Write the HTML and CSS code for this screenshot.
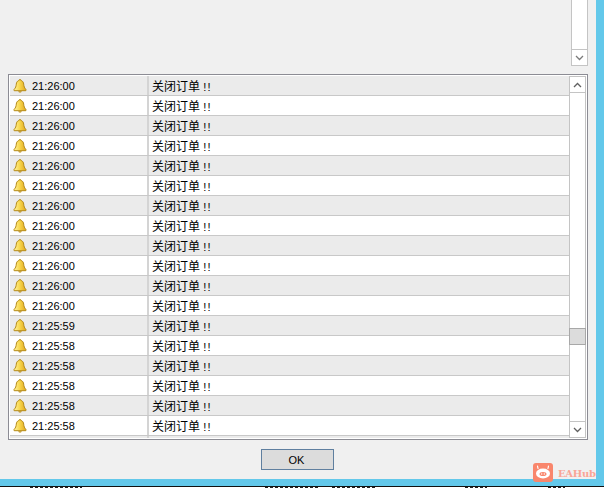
FILE: index.html
```html
<!DOCTYPE html>
<html lang="zh">
<head>
<meta charset="utf-8">
<title>Alerts</title>
<link rel="stylesheet" href="styles.css">
</head>
<body>
<svg class="defs" width="0" height="0" aria-hidden="true">
  <defs>
    <linearGradient id="bellfill" x1="0" y1="0" x2="1" y2="0">
      <stop offset="0" stop-color="#fff2a0"/>
      <stop offset="0.45" stop-color="#f9d84e"/>
      <stop offset="1" stop-color="#e0a820"/>
    </linearGradient>
    <symbol id="bell" viewBox="0 0 14 14">
      <path d="M7 .6c.8 0 1.200.4 1.300 1 1.500.5 2.200 1.800 2.400 3.500.2 2.200.7 3.900 2.200 5.200v1.400H1.100v-1.400c1.500-1.300 2-3 2.200-5.200.2-1.700.9-3 2.400-3.500.1-.6.500-1 1.300-1z" fill="url(#bellfill)" stroke="#b48a18" stroke-width="1"/>
      <path d="M5.200 12.200c.2.900.9 1.400 1.800 1.400s1.600-.5 1.800-1.400z" fill="#b98a14"/>
    </symbol>
  </defs>
</svg>
<div class="desktop">
  <main class="dialog">
    <div class="top-scroll">
      <div class="top-track"></div>
      <div class="sb-btn sb-btn-last">
        <svg class="chev" viewBox="0 0 9 6"><path d="M1 1l3.500 3.500L8 1" fill="none" stroke="#7a7a7a" stroke-width="1.300"/></svg>
      </div>
    </div>
    <section class="listbox">
      <div class="rows">
        <div class="row"><div class="cell-time"><svg class="bell"><use href="#bell"/></svg><span>21:26:00</span></div><div class="cell-msg">关闭订单 <span class="bang">!!</span></div></div>
        <div class="row"><div class="cell-time"><svg class="bell"><use href="#bell"/></svg><span>21:26:00</span></div><div class="cell-msg">关闭订单 <span class="bang">!!</span></div></div>
        <div class="row"><div class="cell-time"><svg class="bell"><use href="#bell"/></svg><span>21:26:00</span></div><div class="cell-msg">关闭订单 <span class="bang">!!</span></div></div>
        <div class="row"><div class="cell-time"><svg class="bell"><use href="#bell"/></svg><span>21:26:00</span></div><div class="cell-msg">关闭订单 <span class="bang">!!</span></div></div>
        <div class="row"><div class="cell-time"><svg class="bell"><use href="#bell"/></svg><span>21:26:00</span></div><div class="cell-msg">关闭订单 <span class="bang">!!</span></div></div>
        <div class="row"><div class="cell-time"><svg class="bell"><use href="#bell"/></svg><span>21:26:00</span></div><div class="cell-msg">关闭订单 <span class="bang">!!</span></div></div>
        <div class="row"><div class="cell-time"><svg class="bell"><use href="#bell"/></svg><span>21:26:00</span></div><div class="cell-msg">关闭订单 <span class="bang">!!</span></div></div>
        <div class="row"><div class="cell-time"><svg class="bell"><use href="#bell"/></svg><span>21:26:00</span></div><div class="cell-msg">关闭订单 <span class="bang">!!</span></div></div>
        <div class="row"><div class="cell-time"><svg class="bell"><use href="#bell"/></svg><span>21:26:00</span></div><div class="cell-msg">关闭订单 <span class="bang">!!</span></div></div>
        <div class="row"><div class="cell-time"><svg class="bell"><use href="#bell"/></svg><span>21:26:00</span></div><div class="cell-msg">关闭订单 <span class="bang">!!</span></div></div>
        <div class="row"><div class="cell-time"><svg class="bell"><use href="#bell"/></svg><span>21:26:00</span></div><div class="cell-msg">关闭订单 <span class="bang">!!</span></div></div>
        <div class="row"><div class="cell-time"><svg class="bell"><use href="#bell"/></svg><span>21:26:00</span></div><div class="cell-msg">关闭订单 <span class="bang">!!</span></div></div>
        <div class="row"><div class="cell-time"><svg class="bell"><use href="#bell"/></svg><span>21:25:59</span></div><div class="cell-msg">关闭订单 <span class="bang">!!</span></div></div>
        <div class="row"><div class="cell-time"><svg class="bell"><use href="#bell"/></svg><span>21:25:58</span></div><div class="cell-msg">关闭订单 <span class="bang">!!</span></div></div>
        <div class="row"><div class="cell-time"><svg class="bell"><use href="#bell"/></svg><span>21:25:58</span></div><div class="cell-msg">关闭订单 <span class="bang">!!</span></div></div>
        <div class="row"><div class="cell-time"><svg class="bell"><use href="#bell"/></svg><span>21:25:58</span></div><div class="cell-msg">关闭订单 <span class="bang">!!</span></div></div>
        <div class="row"><div class="cell-time"><svg class="bell"><use href="#bell"/></svg><span>21:25:58</span></div><div class="cell-msg">关闭订单 <span class="bang">!!</span></div></div>
        <div class="row"><div class="cell-time"><svg class="bell"><use href="#bell"/></svg><span>21:25:58</span></div><div class="cell-msg">关闭订单 <span class="bang">!!</span></div></div>
        <div class="row row-tail"><div class="cell-time"></div><div class="cell-msg"></div></div>
      </div>
      <div class="scrollbar">
        <div class="sb-btn sb-up">
          <svg class="chev" viewBox="0 0 9 6"><path d="M1 5l3.500-3.500L8 5" fill="none" stroke="#606060" stroke-width="1.300"/></svg>
        </div>
        <div class="track">
          <div class="thumb"></div>
        </div>
        <div class="sb-btn sb-down">
          <svg class="chev" viewBox="0 0 9 6"><path d="M1 1l3.500 3.500L8 1" fill="none" stroke="#606060" stroke-width="1.300"/></svg>
        </div>
      </div>
    </section>
    <footer class="actions">
      <button class="ok" type="button">OK</button>
    </footer>
  </main>
</div>
<div class="strip"></div>
<div class="watermark">
  <svg class="wm-icon" viewBox="0 0 20 20">
    <rect width="20" height="19" rx="3" fill="#f9866c"/>
    <path d="M5 5.500L4.500 3M15 5.500L15.500 3" stroke="#fff" stroke-width="1.200" stroke-linecap="round"/>
    <ellipse cx="10" cy="10.500" rx="7" ry="5" fill="#fff"/>
    <ellipse cx="10" cy="11" rx="3.500" ry="2" fill="#f9866c"/>
    <circle cx="8.700" cy="11" r=".7" fill="#fff"/>
    <circle cx="11.300" cy="11" r=".7" fill="#fff"/>
  </svg>
  <span class="wm-text">EAHub</span>
</div>
</body>
</html>
```
FILE: styles.css
```css
* { box-sizing: border-box; }
html, body { margin: 0; padding: 0; }
body {
  width: 604px;
  height: 488px;
  overflow: hidden;
  position: relative;
  background: #fff;
  font-family: "Liberation Sans", "Noto Sans CJK SC", sans-serif;
  font-size: 11px;
  color: #000;
}
.defs { position: absolute; }
.desktop {
  height: 486px;
  background: #63c8ea;
  padding-right: 8px;
  padding-bottom: 7px;
}
.dialog {
  height: 479px;
  background: #f0f0f0;
  display: flex;
  flex-direction: column;
}
.top-scroll {
  align-self: flex-end;
  width: 17px;
  height: 66px;
  margin-right: 8px;
  margin-bottom: 8px;
  border: 1px solid #c4c4c4;
  border-top: 0;
  background: #fff;
  display: flex;
  flex-direction: column;
}
.top-track { flex: 1; }
.sb-btn {
  height: 16px;
  display: flex;
  align-items: center;
  justify-content: center;
  background: #fff;
}
.sb-btn-last { border-top: 1px solid #c4c4c4; }
.chev { width: 9px; height: 6px; display: block; }
.listbox {
  margin-left: 8px;
  width: 580px;
  height: 366px;
  border: 1px solid #8c8c94;
  padding: 1px;
  background: #fff;
  display: flex;
}
.rows {
  flex: 1;
  min-width: 0;
  overflow: hidden;
}
.row {
  display: flex;
  height: 20px;
  border-bottom: 1px solid #c8c8c8;
  background: #fff;
}
.row:nth-child(odd) { background: #ebebeb; }
.row-tail { height: 3px; border-bottom: 0; }
.cell-time {
  width: 139px;
  flex: none;
  display: flex;
  align-items: center;
  padding-left: 3px;
  gap: 5px;
  border-right: 2px solid #d4d4d4;
}
.bell { width: 14px; height: 14px; flex: none; }
.cell-msg {
  padding: 2px 0 0 3px;
  font-size: 12px;
  line-height: 18px;
  white-space: nowrap;
}
.bang {
  font-size: 11px;
  letter-spacing: 1px;
}
.scrollbar {
  width: 17px;
  flex: none;
  border: 1px solid #c4c4c4;
  display: flex;
  flex-direction: column;
  background: #fff;
}
.sb-up { border-bottom: 1px solid #c4c4c4; }
.sb-down { border-top: 1px solid #c4c4c4; }
.track { flex: 1; padding-top: 235px; }
.thumb {
  height: 17px;
  margin: 0 -1px;
  background: #dcdcdc;
  border: 1px solid #a8a8a8;
}
.actions {
  flex: 1;
  display: flex;
  justify-content: center;
  padding: 9px 1px 0 0;
}
.ok {
  width: 73px;
  height: 21px;
  padding: 0 2px 0 0;
  background: #dcdcdc;
  border: 1px solid #5f7f9f;
  border-radius: 0;
  font: 11px "Liberation Sans", sans-serif;
  color: #000;
}
.strip {
  height: 2px;
  border-top: 1px solid #111;
  background:
    repeating-linear-gradient(90deg, #222 0 3px, #fff 3px 5px) 30px 0 / 52px 1px no-repeat,
    repeating-linear-gradient(90deg, #222 0 3px, #fff 3px 5px) 265px 0 / 53px 1px no-repeat,
    repeating-linear-gradient(90deg, #222 0 3px, #fff 3px 5px) 332px 0 / 44px 1px no-repeat,
    repeating-linear-gradient(90deg, #222 0 3px, #fff 3px 5px) 465px 0 / 22px 1px no-repeat,
    repeating-linear-gradient(90deg, #222 0 3px, #fff 3px 5px) 548px 0 / 17px 1px no-repeat,
    #fff;
}
.watermark {
  position: absolute;
  left: 533px;
  top: 463px;
  display: flex;
  align-items: center;
  gap: 5px;
  height: 20px;
}
.wm-icon { width: 20px; height: 20px; display: block; }
.wm-text {
  font: bold 10px "DejaVu Serif", serif;
  letter-spacing: -0.3px;
  color: #f9a596;
}
```
